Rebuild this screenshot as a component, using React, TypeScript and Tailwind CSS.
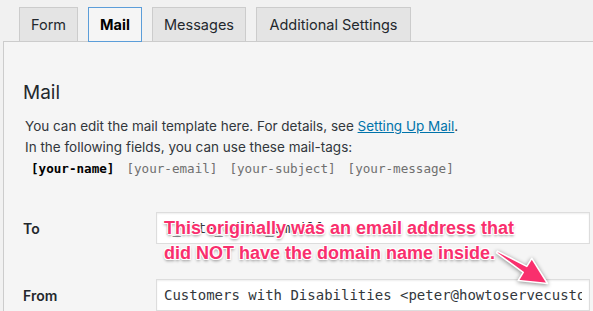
import type { FunctionComponent } from "react";

const TABS = [
  { label: "Form", width: "w-[59px]" },
  { label: "Mail", width: "w-[54px]", active: true },
  { label: "Messages", width: "w-[94px]" },
  { label: "Additional Settings", width: "w-[155px]" },
];

const TAGS = ["[your-name]", "[your-email]", "[your-subject]", "[your-message]"];

const Arrow: FunctionComponent = () => (
  <svg
    width="66"
    height="48"
    viewBox="0 0 66 48"
    className="absolute left-[486px] top-[203px] drop-shadow-[0_1px_2px_rgba(0,0,0,0.45)]"
  >
    <polygon
      points="7.5,6.2 36.8,21.4 41.8,13.4 57.5,38.5 28.2,35.5 33.2,27.4 6.5,7.8"
      fill="#f92f6d"
      stroke="white"
      strokeWidth="1.6"
      strokeLinejoin="round"
    />
  </svg>
);

const FieldRow: FunctionComponent<{ label: string; value: string }> = ({
  label,
  value,
}) => (
  <div className="flex items-center">
    <label className="w-[133px] shrink-0 text-[14px] font-semibold text-[#23282d]">
      {label}
    </label>
    <div className="flex-1 min-w-0 h-[32px] mr-[3px] bg-white border border-[#ddd] shadow-[inset_0_1px_2px_rgba(0,0,0,0.07)] flex items-center px-[7px]">
      <div className="flex-1 min-w-0 overflow-hidden whitespace-nowrap font-['DejaVu_Sans_Mono',monospace] text-[14px] text-[#32373c]">
        {value}
      </div>
    </div>
  </div>
);

export default function App() {
  return (
    <div className="w-[593px] h-[311px] overflow-hidden bg-[#f1f1f1] font-['Inter',sans-serif] flex flex-col">
      <div className="flex gap-[10px] pl-[19px] pt-[7px] -mb-px relative z-10">
        {TABS.map((tab) => (
          <div
            key={tab.label}
            className={`${tab.width} h-[35px] flex items-center justify-center text-[14.5px] border ${
              tab.active
                ? "bg-[#f5f5f5] border-[#5b9dd9] font-bold text-black"
                : "bg-[#e4e4e4] border-[#ccc] text-[#23282d]"
            }`}
          >
            {tab.label}
          </div>
        ))}
      </div>

      <div className="flex-1 ml-[3px] border-l border-t border-[#ccc] bg-[#f5f5f5] pl-[19px] pt-[39px] relative">
        <h2 className="text-[19px] leading-[23px] text-[#23282d]">Mail</h2>

        <div className="mt-[12px] text-[13.5px] leading-[21px] text-[#32373c] pl-[2px]">
          <p>
            You can edit the mail template here. For details, see{" "}
            <a className="text-[#0073aa] underline">Setting Up Mail</a>.
          </p>
          <p>In the following fields, you can use these mail-tags:</p>
          <p className="flex gap-[12px] pl-[6px] font-['DejaVu_Sans_Mono',monospace] text-[12.6px]">
            {TAGS.map((tag, i) => (
              <span
                key={tag}
                className={i === 0 ? "font-bold text-black" : "text-[#6f6f6f]"}
              >
                {tag}
              </span>
            ))}
          </p>
        </div>

        <div className="mt-[33px] flex flex-col gap-[35px]">
          <FieldRow label="To" value="[_site_admin_email]" />
          <FieldRow
            label="From"
            value="Customers with Disabilities <peter@howtoservecustomers.com>"
          />
        </div>

        <div className="absolute left-[160px] top-[174px] text-[18px] leading-[25px] font-bold font-['Liberation_Sans',sans-serif] text-[#f92f6d] [text-shadow:0_0_1px_#fff,1px_1px_0_#fff,-1px_-1px_0_#fff,1px_-1px_0_#fff,-1px_1px_0_#fff,0_2px_3px_rgba(0,0,0,0.45)]">
          <div>This originally was an email address that</div>
          <div>did NOT have the domain name inside.</div>
        </div>

        <Arrow />
      </div>
    </div>
  );
}
